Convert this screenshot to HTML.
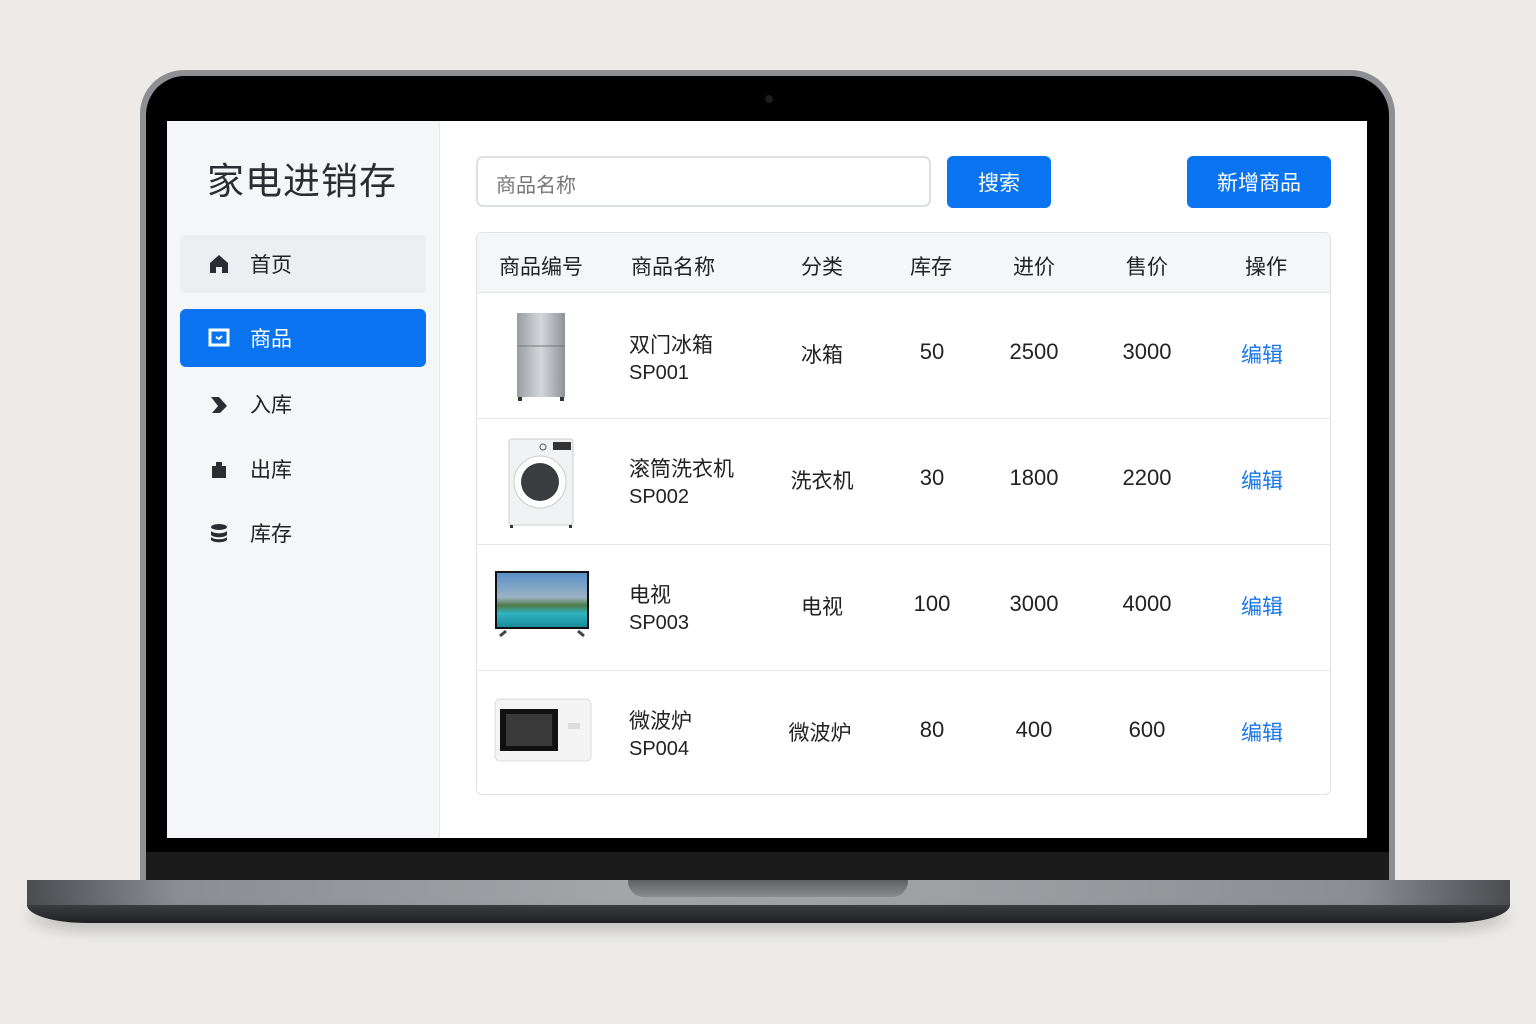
<!DOCTYPE html>
<html><head><meta charset="utf-8"><style>
*{margin:0;padding:0;box-sizing:border-box}
body{width:1536px;height:1024px;background:#ecebe7;position:relative;overflow:hidden;font-family:"Liberation Sans","Noto Sans CJK SC",sans-serif;color:#222}
.a{position:absolute}
.lid{left:140px;top:70px;width:1255px;height:815px;border-radius:44px 44px 0 0;background:#8d8f92}
.bez{left:146px;top:76px;width:1243px;height:809px;border-radius:39px 39px 0 0;background:#000}
.chin{left:146px;top:852px;width:1243px;height:30px;background:#1a1a1a}
.scr{left:167px;top:121px;width:1200px;height:717px;background:#fff;overflow:hidden}
.base{left:27px;top:880px;width:1483px;height:26px;background:linear-gradient(90deg,#4a4c50,#8a8d91 10%,#a3a6a9 40%,#9fa2a5 60%,#8a8d91 90%,#4a4c50)}
.base2{left:27px;top:905px;width:1483px;height:18px;background:linear-gradient(#3a3c40,#1f2023);border-radius:0 0 60px 60px / 0 0 18px 18px;box-shadow:0 8px 14px rgba(0,0,0,.18)}
.notch{left:628px;top:880px;width:280px;height:17px;background:linear-gradient(#5e6064,#8a8c90);border-radius:0 0 16px 16px}
.side{left:0;top:0;width:273px;height:717px;background:#f4f6f8;border-right:1px solid #e3e6ea}
.title{left:40px;top:30px;font-size:37px;color:#2a2d31;letter-spacing:1px}
.nav{left:13px;width:246px;height:58px;border-radius:6px;font-size:21px;display:flex;align-items:center;padding-left:28px}
.nav svg{margin-right:20px}
.inp{left:309px;top:35px;width:455px;height:51px;border:2px solid #dcdfe3;border-radius:7px;font-size:20px;color:#777;padding:11px 18px}
.btn{background:#0a74f0;color:#fff;font-size:21px;border-radius:6px;display:flex;align-items:center;justify-content:center;height:52px;top:35px}
.tbl{left:309px;top:111px;width:855px;height:563px;border:1px solid #dfe2e6;border-radius:6px;overflow:hidden}
.th{left:0;top:0;width:855px;height:60px;background:#f4f6f8;border-bottom:1px solid #e1e4e8}
.c{position:absolute;font-size:21px;transform:translateX(-50%);white-space:nowrap}
.n{font-size:22px}
.row{left:0;width:855px;height:126px;border-bottom:1px solid #e5e7ea}
.blue{color:#1677e8}
</style></head><body>
<div class="a lid"></div><div class="a bez"></div>
<div class="a" style="left:765px;top:95px;width:8px;height:8px;border-radius:50%;background:#1c1c1c"></div>
<div class="a chin"></div>
<div class="a base"></div><div class="a base2"></div><div class="a notch"></div>
<div class="a scr">
 <div class="a side">
  <div class="a title">家电进销存</div>
  <div class="a nav" style="top:114px;background:#eceef1"><svg width="22" height="22" viewBox="0 0 22 22"><path d="M11 2L2 10v10h6v-6h6v6h6V10z" fill="#2a2d31"/></svg>首页</div>
  <div class="a nav" style="top:188px;background:#0a74f0;color:#fff"><svg width="22" height="20" viewBox="0 0 22 20"><rect x="2" y="2" width="18" height="15" fill="none" stroke="#fff" stroke-width="3"/><path d="M8 9l3 2 3-3" stroke="#fff" stroke-width="2" fill="none"/></svg>商品</div>
  <div class="a nav" style="top:254px"><svg width="22" height="22" viewBox="0 0 22 22"><path d="M3 4h8l8 9-7 7H4l6-7z" fill="#2a2d31"/></svg>入库</div>
  <div class="a nav" style="top:319px"><svg width="22" height="22" viewBox="0 0 22 22"><path d="M4 8h4V4h6v4h4v12H4z" fill="#2a2d31"/></svg>出库</div>
  <div class="a nav" style="top:383px"><svg width="22" height="22" viewBox="0 0 22 22"><ellipse cx="11" cy="5" rx="8" ry="3" fill="#2a2d31"/><path d="M3 9c3 3 13 3 16 0v4c-3 3-13 3-16 0zM3 15c3 3 13 3 16 0v3c-3 3-13 3-16 0z" fill="#2a2d31"/></svg>库存</div>
 </div>
 <div class="a inp">商品名称</div>
 <div class="a btn" style="left:780px;width:104px">搜索</div>
 <div class="a btn" style="left:1020px;width:144px">新增商品</div>
 <div class="a tbl">
  <div class="a th">
   <div class="c" style="left:64px;top:18px">商品编号</div>
   <div class="c" style="left:196px;top:18px">商品名称</div>
   <div class="c" style="left:345px;top:18px">分类</div>
   <div class="c" style="left:454px;top:18px">库存</div>
   <div class="c" style="left:557px;top:18px">进价</div>
   <div class="c" style="left:670px;top:18px">售价</div>
   <div class="c" style="left:789px;top:18px">操作</div>
  </div>
  <div class="a row" style="top:60px">
   <svg class="a" style="left:38px;top:18px" width="52" height="92" viewBox="0 0 52 92"><defs><linearGradient id="g1" x1="0" x2="1"><stop offset="0" stop-color="#9a9ea3"/><stop offset=".5" stop-color="#d4d7da"/><stop offset="1" stop-color="#8e9297"/></linearGradient></defs><rect x="2" y="2" width="48" height="84" fill="url(#g1)"/><line x1="2" y1="35" x2="50" y2="35" stroke="#777"/><rect x="3" y="86" width="4" height="4" fill="#333"/><rect x="45" y="86" width="4" height="4" fill="#333"/></svg>
   <div class="a" style="left:152px;top:36px;font-size:21px">双门冰箱</div>
   <div class="a" style="left:152px;top:69px;font-size:20px">SP001</div>
   <div class="c" style="left:345px;top:46px">冰箱</div>
   <div class="c n" style="left:455px;top:46px">50</div>
   <div class="c n" style="left:557px;top:46px">2500</div>
   <div class="c n" style="left:670px;top:46px">3000</div>
   <div class="c blue" style="left:785px;top:46px">编辑</div>
  </div>
  <div class="a row" style="top:186px">
   <svg class="a" style="left:30px;top:18px" width="68" height="92" viewBox="0 0 68 92"><rect x="2" y="2" width="64" height="86" rx="3" fill="#f1f2f3" stroke="#ccc"/><rect x="46" y="5" width="18" height="8" fill="#333"/><circle cx="36" cy="10" r="3" fill="none" stroke="#555"/><circle cx="33" cy="45" r="26" fill="#fff" stroke="#ccc"/><circle cx="33" cy="45" r="19" fill="#3a3c3f"/><rect x="3" y="88" width="3" height="3" fill="#333"/><rect x="62" y="88" width="3" height="3" fill="#333"/></svg>
   <div class="a" style="left:152px;top:34px;font-size:21px">滚筒洗衣机</div>
   <div class="a" style="left:152px;top:67px;font-size:20px">SP002</div>
   <div class="c" style="left:345px;top:46px">洗衣机</div>
   <div class="c n" style="left:455px;top:46px">30</div>
   <div class="c n" style="left:557px;top:46px">1800</div>
   <div class="c n" style="left:670px;top:46px">2200</div>
   <div class="c blue" style="left:785px;top:46px">编辑</div>
  </div>
  <div class="a row" style="top:312px">
   <svg class="a" style="left:17px;top:25px" width="96" height="70" viewBox="0 0 96 70"><defs><linearGradient id="g2" x1="0" y1="0" x2="0" y2="1"><stop offset="0" stop-color="#5a8fc8"/><stop offset=".45" stop-color="#9db3c4"/><stop offset=".6" stop-color="#4f7a4a"/><stop offset=".75" stop-color="#2fb3c2"/><stop offset="1" stop-color="#1a8a9a"/></linearGradient></defs><rect x="1" y="1" width="94" height="58" fill="#111"/><rect x="3" y="3" width="90" height="54" fill="url(#g2)"/><path d="M6 66l6-5M90 66l-6-5" stroke="#444" stroke-width="3"/></svg>
   <div class="a" style="left:152px;top:34px;font-size:21px">电视</div>
   <div class="a" style="left:152px;top:67px;font-size:20px">SP003</div>
   <div class="c" style="left:345px;top:46px">电视</div>
   <div class="c n" style="left:455px;top:46px">100</div>
   <div class="c n" style="left:557px;top:46px">3000</div>
   <div class="c n" style="left:670px;top:46px">4000</div>
   <div class="c blue" style="left:785px;top:46px">编辑</div>
  </div>
  <div class="a row" style="top:438px;border-bottom:none">
   <svg class="a" style="left:17px;top:26px" width="98" height="68" viewBox="0 0 98 68"><rect x="1" y="2" width="96" height="62" rx="5" fill="#f4f4f4" stroke="#ddd"/><rect x="6" y="12" width="58" height="42" fill="#111"/><rect x="12" y="17" width="46" height="32" fill="#3a3a3a"/><rect x="74" y="26" width="12" height="6" fill="#ddd"/></svg>
   <div class="a" style="left:152px;top:34px;font-size:21px">微波炉</div>
   <div class="a" style="left:152px;top:67px;font-size:20px">SP004</div>
   <div class="c" style="left:343px;top:46px">微波炉</div>
   <div class="c n" style="left:455px;top:46px">80</div>
   <div class="c n" style="left:557px;top:46px">400</div>
   <div class="c n" style="left:670px;top:46px">600</div>
   <div class="c blue" style="left:785px;top:46px">编辑</div>
  </div>
 </div>
</div>
</body></html>
